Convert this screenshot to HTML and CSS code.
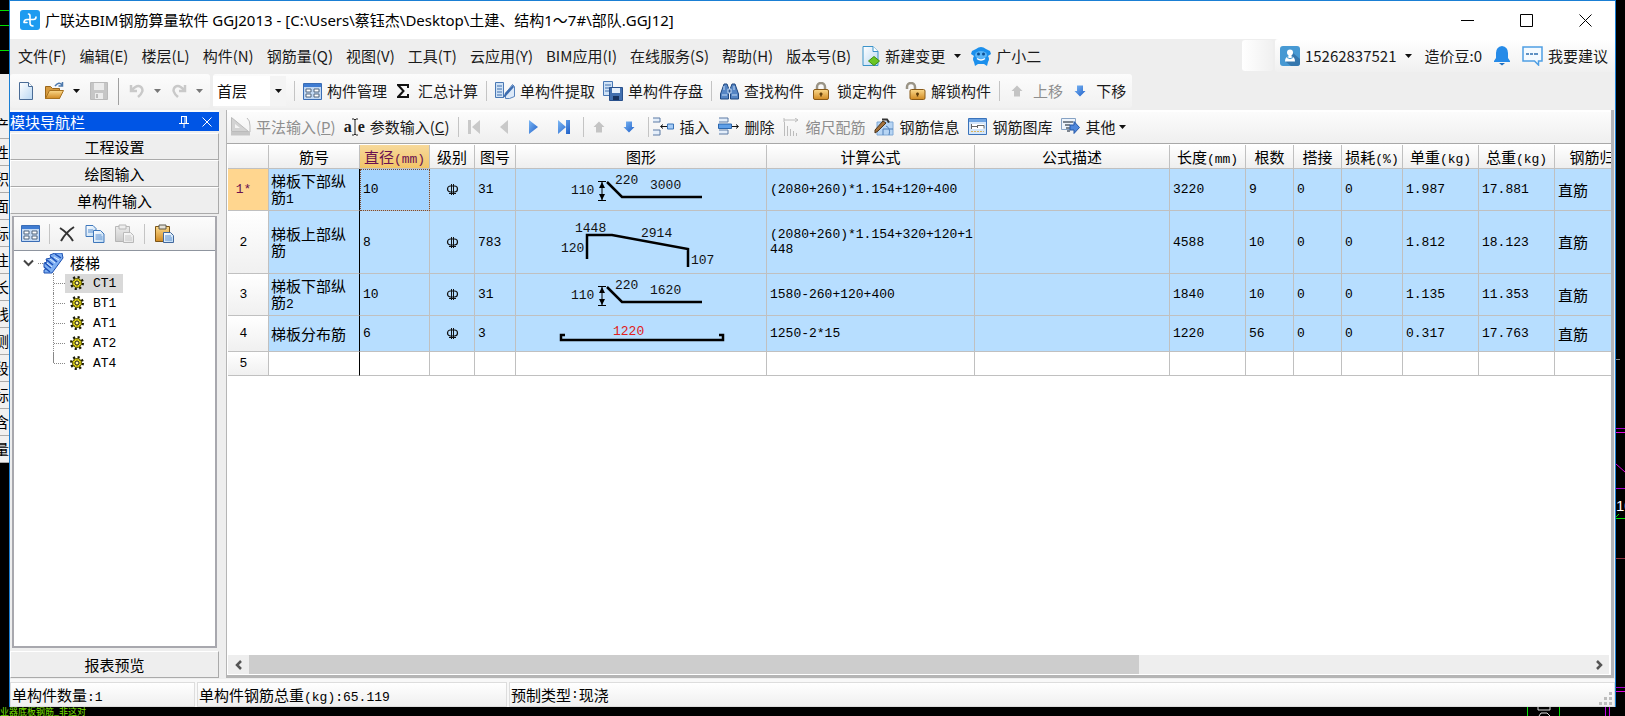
FILE: index.html
```html
<!DOCTYPE html>
<html lang="zh-CN">
<head>
<meta charset="utf-8">
<title>广联达BIM钢筋算量软件 GGJ2013</title>
<link rel="stylesheet" href="styles.css">
</head>
<body>
<svg class="defs" aria-hidden="true">
  <defs>
    <linearGradient id="gBlue" x1="0" y1="0" x2="1" y2="1"><stop offset="0" stop-color="#7db8f5"/><stop offset="1" stop-color="#1e5fc8"/></linearGradient>
    <linearGradient id="gGold" x1="0" y1="0" x2="0" y2="1"><stop offset="0" stop-color="#fbd98b"/><stop offset="1" stop-color="#d18a22"/></linearGradient>
    <linearGradient id="gPage" x1="0" y1="0" x2="1" y2="1"><stop offset="0" stop-color="#ffffff"/><stop offset="1" stop-color="#b9d7f2"/></linearGradient>
    <symbol id="caret" viewBox="0 0 7 4"><path d="M0 0h7L3.500 4z"/></symbol>
    <symbol id="form" viewBox="0 0 19 17"><path d="M.5.500h18v16H.5z" fill="#c3d9f3" stroke="#3a6db5"/><path d="M1 1h17v3H1z" fill="#3f7cd2"/><path d="M3 6h5v3H3zM3 11h5v3H3zM11 6h5v3h-5zM11 11h5v3h-5z" fill="#fff" stroke="#51647d"/></symbol>
    <symbol id="lock" viewBox="0 0 18 18"><path d="M5 9V5a4 4 0 0 1 8 0v4" fill="none" stroke="#9a9486" stroke-width="2.500"/><rect x="1.500" y="7.500" width="15" height="10" rx="1.500" fill="url(#gGold)" stroke="#8a5a17"/><path d="M9 10.500v4M7.500 12h3" stroke="#5c3a08" stroke-width="1.500"/></symbol>
    <symbol id="up" viewBox="0 0 12 12"><path d="M6 .5 11.500 6H9v5.500H3V6H.5z"/></symbol>
    <symbol id="down" viewBox="0 0 12 12"><path d="M6 11.500.5 6H3V.5h6V6h2.500z"/></symbol>
    <symbol id="gear" viewBox="0 0 14 14"><circle cx="7" cy="7" r="5.500" fill="none" stroke="#1b1b08" stroke-width="3" stroke-dasharray="2 2.300"/><circle cx="7" cy="7" r="4.500" fill="#f0e21c" stroke="#55500a"/><path d="M7 2v10M2 7h10M3.500 3.500l7 7M10.500 3.500l-7 7" stroke="#8c840c" stroke-width=".8"/><circle cx="7" cy="7" r="2" fill="#fff79a" stroke="#222"/></symbol>
    <symbol id="grade" viewBox="0 0 13 13"><rect x="1.500" y="3" width="10" height="6" rx="3" fill="none" stroke="#111" stroke-width="1.200"/><path d="M5.500 1v11M7.500 1v11" stroke="#111"/><path d="M3 10.500h7" stroke="#111"/></symbol>
    <symbol id="paste" viewBox="0 0 21 20"><path d="M1.500 2.500h14v15h-14z" fill="url(#gGold)" stroke="#7d5516"/><path d="M5 1h7v4H5z" fill="#e3e0d8" stroke="#5f5a4d"/><path d="M9.500 8.500h7l3 3v7h-10z" fill="url(#gPage)" stroke="#42689d"/><path d="M11 12h6M11 14h7M11 16h7" stroke="#5b8fd0"/></symbol>
  </defs>
</svg>

<div class="desktop">
  <aside class="back-left">
    <svg class="cad-top" viewBox="0 0 9 74" fill="none" stroke="#00e000"><path d="M0 10.500h9M0 25.500h9M0 50.500h9"/></svg>
    <ul class="back-list"><li></li><li>产</li><li>性</li><li>积</li><li>面</li><li>标</li><li>注</li><li>长</li><li>线</li><li>测</li><li>段</li><li>标</li><li>含</li><li>量</li></ul>
    <div class="back-gap"></div>
  </aside>

  <div class="window">
    <header class="titlebar">
      <svg class="logo" width="20" height="20" viewBox="0 0 20 20"><rect width="20" height="20" rx="3" fill="#1d9bf0"/><path d="M8.500 4q1.500 0 1.500 2v7q0 3 3 3M4 12.500q0-3 3-3h6.500q2.500 0 2.500-2.500M4 12.500h3" fill="none" stroke="#fff" stroke-width="1.600" stroke-linecap="round"/></svg>
      <h1>广联达BIM钢筋算量软件 GGJ2013 - [C:\Users\蔡钰杰\Desktop\土建、结构1～7#\部队.GGJ12]</h1>
      <div class="wincontrols">
        <button aria-label="最小化"><svg width="13" height="13"><path d="M0 6.500h13" stroke="#000"/></svg></button>
        <button aria-label="最大化"><svg width="13" height="13"><path d="M.5.500h12v12H.5z" fill="none" stroke="#000"/></svg></button>
        <button aria-label="关闭"><svg width="13" height="13"><path d="M.5.500l12 12M12.500.5l-12 12" stroke="#000"/></svg></button>
      </div>
    </header>

    <nav class="menubar">
      <div class="menus">
        <button>文件(F)</button><button>编辑(E)</button><button>楼层(L)</button><button>构件(N)</button><button>钢筋量(Q)</button><button>视图(V)</button><button>工具(T)</button><button>云应用(Y)</button><button>BIM应用(I)</button><button>在线服务(S)</button><button>帮助(H)</button><button>版本号(B)</button>
      </div>
      <button class="tool"><svg width="18" height="20" viewBox="0 0 18 20"><path d="M1 .5h10l5 5v14H1z" fill="url(#gPage)" stroke="#3b93c9"/><path d="M11 .5v5h5" fill="#fff" stroke="#3b93c9"/><path d="M12 10.500l5.500 4.500-5.500 4.500L6.500 15z" fill="#6ac625" stroke="#3f8d10"/></svg>新建变更<svg class="caret" width="7" height="4"><use href="#caret"/></svg></button>
      <button class="tool"><svg width="20" height="20" viewBox="0 0 20 20"><path d="M5 3q5-4 10 0l4 2 1 3-3 2q2 3 0 6l-1 4-3-2H7l-3 2-1-4q-2-3 0-6L0 8l1-3z" fill="#1b8fec"/><ellipse cx="10" cy="9" rx="6" ry="4" fill="#58b4f7"/><circle cx="7.500" cy="8" r="1.500" fill="#0c4f93"/><circle cx="12.500" cy="8" r="1.500" fill="#0c4f93"/><path d="M6 12.500q4 3 8 0" stroke="#fff" stroke-width="1.500" fill="none"/></svg>广小二</button>
      <div class="blank-tab"></div>
      <div class="account">
        <button class="tool"><svg width="20" height="20" viewBox="0 0 20 20"><rect width="20" height="20" rx="3" fill="#4799d3"/><path d="M13 7l7 6v4q0 3-3 3h-6l-5-4z" fill="#3577ae"/><circle cx="10" cy="6.500" r="3" fill="#fff"/><path d="M8.500 8h3v2.500q3.500.5 3.500 5H5q0-4.500 3.500-5z" fill="#fff"/><path d="M7 11.500q3 2.500 6 0" stroke="#4799d3" fill="none"/></svg><span class="phone">15262837521</span><svg class="caret" width="7" height="4"><use href="#caret"/></svg></button>
        <span class="beans">造价豆:0</span>
        <button class="tool" aria-label="消息"><svg width="16" height="20" viewBox="0 0 16 20"><path d="M8 0q6 1 6 7v5l2 3v1H0v-1l2-3V7Q2 1 8 0z" fill="#268be8"/><path d="M5 17h6l-3 2.500z" fill="#1d6fc0"/></svg></button>
        <button class="tool feedback"><svg width="21" height="20" viewBox="0 0 21 20"><path d="M1 1h19v14h-3.500v4l-4-4H1z" fill="#f4faff" stroke="#4f9fe4" stroke-width="1.500"/><path d="M4 8h3M8 8h3M12 8h4" stroke="#2e6fb0" stroke-width="1.500"/></svg>我要建议</button>
      </div>
    </nav>

    <div class="toolbar main-tools">
      <div class="tb-group first">
        <button aria-label="新建"><svg width="16" height="18" viewBox="0 0 16 18"><path d="M1.500.5h9l4 4v13h-13z" fill="url(#gPage)" stroke="#4a6c96"/><path d="M10.500.5v4h4" fill="#fff" stroke="#4a6c96"/></svg></button>
        <button aria-label="打开" class="open"><svg width="21" height="18" viewBox="0 0 21 18"><path d="M1.500 16.500v-12h5l2 2h7v10z" fill="#d69a3e" stroke="#9a661a"/><path d="M1.500 16.500l4-8h14l-4 8z" fill="url(#gGold)" stroke="#a8721f"/><path d="M11 4q4-5 7-1M18.500 0v4h-4" fill="none" stroke="#4d79ad" stroke-width="1.500"/></svg><svg class="caret" width="7" height="4"><use href="#caret"/></svg></button>
        <button aria-label="保存" disabled><svg width="18" height="18" viewBox="0 0 18 18"><path d="M.5.500h17v17H.5z" fill="#c6c6c6" stroke="#bababa"/><path d="M4 1h10v7H4zM5 11h8v6H5z" fill="#ececec"/><path d="M6 12h2v4H6z" fill="#bbb"/></svg></button>
        <i class="sep dark"></i>
        <button aria-label="撤销" disabled class="undo"><svg width="16" height="16" viewBox="0 0 16 16"><path d="M2 2v6h6M3 7q5-6 9-3 4 4-3 10" fill="none" stroke="#c9c9c9" stroke-width="2.500"/></svg><svg class="caret" width="7" height="4"><use href="#caret"/></svg></button>
        <button aria-label="重做" disabled class="undo"><svg width="16" height="16" viewBox="0 0 16 16"><path d="M14 2v6H8M13 7Q8 1 4 4q-4 4 3 10" fill="none" stroke="#c9c9c9" stroke-width="2.500"/></svg><svg class="caret" width="7" height="4"><use href="#caret"/></svg></button>
      </div>
      <div class="tb-group second">
        <div class="combo"><select aria-label="楼层"><option>首层</option></select><svg class="caret" width="7" height="4"><use href="#caret"/></svg></div>
        <i class="sep"></i>
        <button><svg width="19" height="17"><use href="#form"/></svg>构件管理</button>
        <button class="sum"><svg width="12" height="14" viewBox="0 0 12 14"><path d="M11 4V1H1l5.500 6L1 13h10v-3" fill="none" stroke="#111" stroke-width="2"/></svg>汇总计算</button>
        <i class="sep"></i>
        <button><svg width="20" height="18" viewBox="0 0 20 18"><path d="M.5.500h8v15h-8z" fill="#cfe2f6" stroke="#4a78b4"/><path d="M2 4h5M2 7h5M2 10h5M2 13h5" stroke="#3f6fae"/><path d="M10.500 16.500v-5l7-9 2 2v10l-5 2z" fill="#dce9f8" stroke="#5682bc"/><path d="M8 16l2-5 8-8 1 2-8 9z" fill="#3d6db0"/></svg>单构件提取</button>
        <button><svg width="20" height="20" viewBox="0 0 20 20"><path d="M.5.500h9v14h-9z" fill="#cfe2f6" stroke="#4a78b4"/><path d="M2 4h6M2 7h6M2 10h6" stroke="#3f6fae"/><path d="M6.500 6.500h13v13h-13z" fill="#426fae" stroke="#28508c"/><path d="M9 7h8v5H9z" fill="#e6f0fb"/><path d="M10 15h6v4h-6z" fill="#17325e"/></svg>单构件存盘</button>
        <i class="sep"></i>
        <button><svg width="19" height="17" viewBox="0 0 19 17"><path d="M4 1h3l1.500 4v11h-8v-5zM12 1h3l3.500 10v5h-8V5z" fill="#5585c4" stroke="#1f477f"/><path d="M2 12h5M12 12h5M8 6h3v4H8zM4 3v4M14 3v4" stroke="#c5dbf5" fill="#2b5590"/></svg>查找构件</button>
        <button class="wide"><svg width="18" height="18"><use href="#lock"/></svg>锁定构件</button>
        <button><svg width="21" height="18" viewBox="0 0 21 18"><path d="M2 7V5a4 4 0 0 1 8 0v4" fill="none" stroke="#9a9486" stroke-width="2.500"/><rect x="5" y="7.500" width="15" height="10" rx="1.500" fill="url(#gGold)" stroke="#8a5a17"/><path d="M12.500 10.500v4M11 12h3" stroke="#5c3a08" stroke-width="1.500"/></svg>解锁构件</button>
        <i class="sep"></i>
        <button disabled class="move"><svg width="12" height="12" fill="#c4c4c4"><use href="#up"/></svg>上移</button>
        <button class="move"><svg width="12" height="12" fill="url(#gBlue)"><use href="#down"/></svg>下移</button>
      </div>
    </div>

    <div class="workspace">
      <section class="sidebar">
        <div class="side-title"><span>模块导航栏</span>
          <button aria-label="固定"><svg width="10" height="12" viewBox="0 0 10 12"><path d="M2.500 1v6M6 1v6M2 .5h6M7.500 1v6M0 7.500h10M5 8v4" stroke="#fff" fill="none"/></svg></button>
          <button aria-label="关闭"><svg width="10" height="10"><path d="M.5.500l9 9M9.500.5l-9 9" stroke="#fff"/></svg></button>
        </div>
        <button class="nav-btn">工程设置</button>
        <button class="nav-btn">绘图输入</button>
        <button class="nav-btn">单构件输入</button>
        <div class="tree-panel">
          <div class="tree-tools">
            <button aria-label="构件管理"><svg width="19" height="17"><use href="#form"/></svg></button>
            <i class="sep"></i>
            <button aria-label="删除"><svg width="16" height="16" viewBox="0 0 16 16"><path d="M1 2q8 5 13 13M15 1Q7 6 2 15" stroke="#333" stroke-width="2" fill="none"/></svg></button>
            <button aria-label="复制" class="copy"><svg width="20" height="18" viewBox="0 0 20 18"><path d="M1 .5h7l3 3v8H1z" fill="url(#gPage)" stroke="#3e77bb"/><path d="M8.500 5.500h7l3.500 3.500v8.500H8.500z" fill="url(#gPage)" stroke="#3e77bb"/><path d="M3 5h5M3 7h5M10.500 10h6M10.500 12h7M10.500 14h7" stroke="#5b8fd0"/></svg></button>
            <button aria-label="粘贴" disabled class="faded"><svg width="21" height="20"><use href="#paste"/></svg></button>
            <i class="sep"></i>
            <button aria-label="粘贴构件"><svg width="21" height="20"><use href="#paste"/></svg></button>
          </div>
          <div class="tree">
            <button class="tree-root"><svg width="11" height="8" viewBox="0 0 11 8"><path d="M1 1.500l4.500 4.500L10 1.500" fill="none" stroke="#444" stroke-width="2"/></svg><i class="dots"></i><svg width="21" height="21" viewBox="0 0 21 21"><path d="M1 20v-3l2-1-2-2v-4l3-1-1-3 5-1-1-3 5-2h7l1 5-11 15z" fill="#7fb0f2" stroke="#1c4fb0"/><path d="M2 10l6 5M4 7l6 5M8 4l6 5M12 1l6 4M1 14l6 5" stroke="#1c50b8" stroke-width="1.500"/><path d="M4 10l5 4M7 6l5 4M11 4l5 3" stroke="#e2efff"/></svg><span>楼梯</span></button>
            <ul>
              <li class="on"><button><svg width="14" height="14"><use href="#gear"/></svg>CT1</button></li>
              <li><button><svg width="14" height="14"><use href="#gear"/></svg>BT1</button></li>
              <li><button><svg width="14" height="14"><use href="#gear"/></svg>AT1</button></li>
              <li><button><svg width="14" height="14"><use href="#gear"/></svg>AT2</button></li>
              <li><button><svg width="14" height="14"><use href="#gear"/></svg>AT4</button></li>
            </ul>
          </div>
        </div>
        <button class="nav-btn">报表预览</button>
      </section>

      <main class="editor">
        <div class="toolbar edit-tools">
          <button disabled><svg width="20" height="19" viewBox="0 0 20 19"><path d="M.5.500v14h17z" fill="#d3d3d3" stroke="#bbb"/><path d="M4 7v4h5z" fill="#f4f4f4"/><path d="M16 1q3 2 3 8v6h-4" fill="none" stroke="#bbb"/><path d="M0 15h19v3.500H0z" fill="#c6c6c6"/></svg><span>平法输入(<u>P</u>)</span></button>
          <button class="param"><span class="aie">a</span><svg width="6" height="18" viewBox="0 0 6 18"><path d="M0 1h2l1 1 1-1h2M3 2v14M0 17h2l1-1 1 1h2" fill="none" stroke="#222"/></svg><span class="aie end">e</span><span>参数输入(<u>C</u>)</span></button>
          <i class="sep"></i>
          <button aria-label="首条" disabled><svg width="12" height="14"><path d="M0 0h3v14H0zM12 0v14L4 7z" fill="#c9c9c9"/></svg></button>
          <button aria-label="上一条" disabled><svg width="8" height="14"><path d="M8 0v14L0 7z" fill="#c9c9c9"/></svg></button>
          <button aria-label="下一条"><svg width="9" height="14"><path d="M0 0v14l9-7z" fill="url(#gBlue)"/></svg></button>
          <button aria-label="末条"><svg width="12" height="14"><path d="M0 0v14l8-7zM8 0h4v14H8z" fill="url(#gBlue)"/></svg></button>
          <i class="sep"></i>
          <button aria-label="上移" disabled><svg width="12" height="12" fill="#c4c4c4"><use href="#up"/></svg></button>
          <button aria-label="下移"><svg width="12" height="12" fill="url(#gBlue)"><use href="#down"/></svg></button>
          <i class="sep"></i>
          <button class="op"><svg width="21" height="19" viewBox="0 0 21 19"><path d="M0 1h7v4H0M0 13h7v5H0" fill="#e4eefa" stroke="#5d7ba4"/><path d="M8 9.500h6M10 7.500l-2.500 2 2.500 2" fill="none" stroke="#111"/><path d="M14.500 7h6v5h-6z" fill="#a5cbf5" stroke="#3b74b8"/></svg>插入</button>
          <button class="op"><svg width="21" height="19" viewBox="0 0 21 19"><path d="M1 1h9v4H1M1 13h9v4H1" fill="#e4eefa" stroke="#5d7ba4"/><path d="M.5 7h13v4.500H.5z" fill="#5f9fe8" stroke="#2b66ad"/><path d="M14 9.500h6M18 7.500l2.500 2-2.500 2" fill="none" stroke="#111"/></svg>删除</button>
          <button disabled class="op"><svg width="17" height="18" viewBox="0 0 17 18"><path d="M1.500 4v14M4.500 8v10M7.500 11v7M10.500 13v5M13.500 15v3M1 2h14M12 0l3 2-3 2M1 0v4" fill="none" stroke="#bcbcbc"/></svg>缩尺配筋</button>
          <button class="op"><svg width="20" height="18" viewBox="0 0 20 18"><path d="M3 4h16v13H3z" fill="#b7d5f4" stroke="#7fa8d6"/><path d="M9 17v-6h10M12 8q5 2 3 9" fill="none" stroke="#4f7fb8"/><path d="M1 12L9 3l3 2-8 8-3 2z" fill="#a5713a" stroke="#4b3319"/><path d="M8 1.500h5l2 3" fill="none" stroke="#333" stroke-width="2"/></svg>钢筋信息</button>
          <button class="op"><svg width="19" height="17" viewBox="0 0 19 17"><path d="M.5.500h18v16H.5z" fill="#d5e6f9" stroke="#3a73bb"/><path d="M1 1h17v3H1z" fill="#6da3e2"/><path d="M3 6h13v5H3z" fill="#fff"/><path d="M3.500 6v5M3 8.500h6M9.500 7v3M9 7.500h7v3" fill="none" stroke="#666"/><path d="M3 13.500h13" stroke="#d7b35d" stroke-dasharray="2 1"/></svg>钢筋图库</button>
          <button class="op"><svg width="19" height="17" viewBox="0 0 19 17"><path d="M.5.500h14v11H.5z" fill="#eef4fb" stroke="#86a2c4"/><path d="M2 4h10M4 7h5M5 10h4M6 13h3" stroke="#55606e" stroke-width="1.500"/><path d="M9 7h4V3.500l5.500 6L13 15.500V12H9z" fill="#4f87dc" stroke="#2458a8"/></svg>其他<svg class="caret" width="7" height="4"><use href="#caret"/></svg></button>
        </div>
        <div class="grid-wrap">
          <table>
            <colgroup><col class="w41"><col class="w91"><col class="w70"><col class="w45"><col class="w41"><col class="wshape"><col class="wformula"><col class="wdesc"><col class="w76"><col class="w48"><col class="w48"><col class="w61"><col class="w76"><col class="w76"><col class="w90"></colgroup>
            <thead><tr><th></th><th>筋号</th><th class="hot">直径<span class="n">(mm)</span></th><th>级别</th><th>图号</th><th>图形</th><th>计算公式</th><th>公式描述</th><th>长度<span class="n">(mm)</span></th><th>根数</th><th>搭接</th><th>损耗<span class="n">(%)</span></th><th>单重<span class="n">(kg)</span></th><th>总重<span class="n">(kg)</span></th><th>钢筋归类</th></tr></thead>
            <tbody>
              <tr class="h2"><th class="cur">1*</th><td class="name">梯板下部纵筋<span class="n">1</span></td><td class="sel">10</td><td class="mid"><svg width="13" height="13"><use href="#grade"/></svg></td><td>31</td>
                <td class="shape"><svg width="172" height="38" viewBox="0 0 172 38"><text x="18" y="23">110</text><path d="M45 10.500h8M45 29.500h8M49 11v18" class="thin"/><path d="M49 11l3 6h-6zM49 29l3-6h-6z"/><path d="M54 11l15 15h80" class="bar"/><text x="62" y="13">220</text><text x="97" y="18">3000</text></svg></td>
                <td>(2080+260)*1.154+120+400</td><td></td><td>3220</td><td>9</td><td>0</td><td>0</td><td>1.987</td><td>17.881</td><td class="cjk">直筋</td></tr>
              <tr class="h3"><th>2</th><td class="name">梯板上部纵筋</td><td>8</td><td class="mid"><svg width="13" height="13"><use href="#grade"/></svg></td><td>783</td>
                <td class="shape"><svg width="172" height="56" viewBox="0 0 172 56"><text x="8" y="38">120</text><text x="22" y="18">1448</text><path d="M34 45V21h25l76 14v18" class="bar"/><text x="88" y="23">2914</text><text x="138" y="50">107</text></svg></td>
                <td>(2080+260)*1.154+320+120+1<br>448</td><td></td><td>4588</td><td>10</td><td>0</td><td>0</td><td>1.812</td><td>18.123</td><td class="cjk">直筋</td></tr>
              <tr class="h2"><th>3</th><td class="name">梯板下部纵筋<span class="n">2</span></td><td>10</td><td class="mid"><svg width="13" height="13"><use href="#grade"/></svg></td><td>31</td>
                <td class="shape"><svg width="172" height="38" viewBox="0 0 172 38"><text x="18" y="23">110</text><path d="M45 10.500h8M45 29.500h8M49 11v18" class="thin"/><path d="M49 11l3 6h-6zM49 29l3-6h-6z"/><path d="M54 11l15 15h80" class="bar"/><text x="62" y="13">220</text><text x="97" y="18">1620</text></svg></td>
                <td>1580-260+120+400</td><td></td><td>1840</td><td>10</td><td>0</td><td>0</td><td>1.135</td><td>11.353</td><td class="cjk">直筋</td></tr>
              <tr class="h1"><th>4</th><td class="name">梯板分布筋</td><td>6</td><td class="mid"><svg width="13" height="13"><use href="#grade"/></svg></td><td>3</td>
                <td class="shape"><svg width="172" height="32" viewBox="0 0 172 32"><text x="60" y="17" class="red">1220</text><path d="M12 17H8v5h162v-5h-4" class="bar"/></svg></td>
                <td>1250-2*15</td><td></td><td>1220</td><td>56</td><td>0</td><td>0</td><td>0.317</td><td>17.763</td><td class="cjk">直筋</td></tr>
              <tr class="new"><th>5</th><td class="name"></td><td></td><td></td><td></td><td></td><td></td><td></td><td></td><td></td><td></td><td></td><td></td><td></td><td></td></tr>
            </tbody>
          </table>
        </div>
        <div class="hscroll">
          <button aria-label="向左"><svg width="8" height="10" viewBox="0 0 8 10"><path d="M6 1L2 5l4 4" fill="none" stroke="#555" stroke-width="2.500"/></svg></button>
          <div class="track"><div class="thumb"></div></div>
          <button aria-label="向右"><svg width="8" height="10" viewBox="0 0 8 10"><path d="M2 1l4 4-4 4" fill="none" stroke="#555" stroke-width="2.500"/></svg></button>
        </div>
      </main>
    </div>

    <footer class="statusbar">
      <div class="cell count">单构件数量<span class="n">:1</span></div>
      <div class="cell total">单构件钢筋总重<span class="n">(kg):65.119</span></div>
      <div class="cell kind">预制类型<span class="n">:</span>现浇
        <svg class="grip" width="14" height="14"><path d="M10 0h3v3h-3zM5 5h3v3H5zM10 5h3v3h-3zM0 10h3v3H0zM5 10h3v3H5zM10 10h3v3h-3z" fill="#bdbdbd"/></svg></div>
    </footer>
  </div>

  <svg class="back-right" width="9" height="707" viewBox="0 0 9 707" fill="none">
    <path d="M0 359.500h4" stroke="#888"/><path d="M0 428.500h9M0 488.500h9M0 687.500h9" stroke="#a000c8"/><path d="M0 432.500h9M0 464l9 8M0 691.500h9" stroke="#e000e0"/><path d="M0 518.500h9M0 517l3-3" stroke="#00e000"/><path d="M0 558.500h9" stroke="#8a3040"/><text x="0" y="511">10</text>
  </svg>
  <div class="back-bottom">
    <span class="cad-text">业器底板钢筋_非这对</span>
    <svg width="100" height="9" viewBox="0 0 100 9" fill="none"><path d="M2.500 0v9M34.500 0v9" stroke="#00e000"/><path d="M80.500 0v9M84.500 0v9" stroke="#c000e0"/><path d="M13 3h12M13 0v3M25 0v3M14 9l2-3h6l3 3" stroke="#ddd"/></svg>
  </div>
</div>
</body>
</html>
```

FILE: styles.css
```css
* { box-sizing: border-box; }
html, body { height: 100%; }
body {
  margin: 0;
  background: #000;
  color: #1a1a1a;
  font: 15px/20px "Noto Sans CJK SC", sans-serif;
  overflow: hidden;
}
button {
  border: 0;
  padding: 0;
  background: none;
  font: inherit;
  color: inherit;
  display: flex;
  align-items: center;
  white-space: nowrap;
}
button:disabled { color: #8e8e8e; }
svg { display: block; flex: none; }
ul { list-style: none; margin: 0; padding: 0; }
.defs { position: absolute; width: 0; height: 0; }
.n { font: 13px/13px "Liberation Mono", monospace; }

.desktop {
  min-height: 100vh;
  display: grid;
  grid-template-columns: 9px minmax(0, 1fr) 9px;
  grid-template-rows: minmax(0, 1fr) 9px;
}

/* parts of the windows behind */
.back-left { overflow: hidden; display: flex; flex-direction: column; }
.cad-top { width: 9px; height: 74px; }
.back-list { background: #f0f0f0; color: #000; }
.back-list li {
  height: 27px;
  line-height: 26px;
  border-bottom: 1px solid #aaa;
  display: flex;
  justify-content: flex-end;
}
.back-list li:first-child { height: 38px; border: 0; }
.back-right { overflow: hidden; }
.back-right text { fill: #fff; font: 15px "Liberation Sans Narrow", "Liberation Sans", sans-serif; }
.back-bottom {
  grid-column: 1 / -1;
  display: flex;
  justify-content: space-between;
  overflow: hidden;
}
.cad-text { color: #7be000; font-size: 9px; line-height: 9px; }

.window {
  display: flex;
  flex-direction: column;
  min-width: 0;
  background: #eee;
  border: 1px solid #1a7fd4;
  border-bottom: 0;
}

/* title */
.titlebar { height: 38px; flex: none; display: flex; align-items: center; background: #fff; padding-left: 10px; color: #000; }
.titlebar h1 { margin: 0 0 0 5px; font: 400 15px/20px "Noto Sans", "Noto Sans CJK SC", sans-serif; flex: 1; white-space: nowrap; }
.wincontrols { display: flex; }
.wincontrols button { width: 59px; height: 38px; justify-content: center; }

/* menus */
.menubar { height: 35px; flex: none; display: flex; align-items: flex-start; }
.menubar > .tool, .menus, .account { height: 33px; }
.menus { display: flex; gap: 13px; padding: 0 11px 0 8px; }
.tool { display: flex; align-items: center; gap: 5px; margin-right: 10px; }
.caret { fill: #111; margin-left: 4px; }
button:disabled .caret { fill: #777; }
.blank-tab { width: 31px; height: 31px; margin: 1px 2px 0 auto; background: linear-gradient(90deg, #fff, #f0f0f0); border-radius: 3px; }
.account {
  display: flex;
  align-items: center;
  padding: 0 7px 0 5px;
  background: linear-gradient(#fff, #f0f0f0);
  border-radius: 3px 0 0 3px;
}
.account .tool { margin-right: 12px; }
.account .tool.feedback { margin-right: 0; }
.beans { margin-right: 12px; }

/* toolbars */
.toolbar { display: flex; align-items: center; }
.toolbar button { gap: 5px; }
.sep { width: 1px; height: 20px; background: #c4c4c4; flex: none; }
.sep.dark { background: #a0a0a0; height: 27px; }
.main-tools { height: 34px; flex: none; margin-bottom: 2px; gap: 3px; }
.tb-group {
  height: 34px;
  display: flex;
  align-items: center;
  background: linear-gradient(#fcfcfc, #f1f1f1);
  border-radius: 3px;
}
.first { gap: 10px; padding: 0 7px 0 8px; }
.toolbar .open { gap: 4px; }
.toolbar .undo { gap: 5px; }
.second { gap: 8px; padding-right: 6px; }
.combo { display: flex; align-items: center; position: relative; height: 30px; background: #fff; }
.combo select {
  appearance: none;
  width: 73px;
  height: 30px;
  border: 0;
  padding: 0 0 0 4px;
  background: linear-gradient(90deg, #fff 57px, #f4f4f4 57px);
  font: inherit;
  color: #111;
}
.combo .caret { position: absolute; right: 4px; pointer-events: none; }
.toolbar .sum { gap: 9px; margin-left: 2px; }
.toolbar .wide { gap: 7px; }
.toolbar .move { gap: 10px; margin-left: 3px; }

/* work area */
.workspace { flex: 1; min-height: 0; display: flex; gap: 7px; }
.sidebar { width: 209px; flex: none; display: flex; flex-direction: column; border-top: 2px solid #fafafa; }
.side-title { height: 19px; flex: none; display: flex; align-items: center; gap: 13px; background: #0055e5; color: #fff; padding-right: 7px; margin-bottom: 2px; }
.side-title span { flex: 1; }
.nav-btn {
  height: 27px;
  flex: none;
  justify-content: center;
  color: #000;
  background: #eee;
  border: 1px solid #aaa;
  border-top-color: #fff;
  border-left-color: #fff;
}
.tree-panel { flex: 1; min-height: 0; margin: 2px 2px 3px; border: 1px solid #a8a8ae; border-width: 1px 2px 2px; display: flex; flex-direction: column; }
.tree-tools { height: 34px; flex: none; display: flex; align-items: center; padding-left: 7px; gap: 9px; background: linear-gradient(#fcfcfc, #efefef); border-bottom: 1px solid #8f959f; }
.tree-tools .copy { margin-left: 1px; }
.faded { filter: grayscale(1); opacity: .4; }
.tree { flex: 1; background: #fff; padding: 2px 0 0 9px; color: #000; }
.tree-root { height: 20px; width: 100%; }
.dots { width: 5px; margin-left: 4px; border-top: 1px dotted #888; }
.tree-root span { margin-left: 6px; }
.tree ul { margin-left: 30px; }
.tree li { height: 20px; display: flex; align-items: center; border-left: 1px dotted #888; }
.tree li:last-child { border-image: linear-gradient(#888 50%, transparent 50%) 1; }
.tree li::before { content: ""; width: 11px; border-top: 1px dotted #888; }
.tree li button { height: 19px; padding: 0 7px 0 5px; gap: 9px; font: 13px "Liberation Mono", monospace; }
.tree li.on button { background: #d9d9d9; }

/* editor */
.editor { flex: 1; min-width: 0; display: flex; flex-direction: column; margin-right: 1px; border: 1px solid #b5b5b5; border-width: 0 3px 3px 1px; border-right-color: #b3b4b8; background: #fff; }
.edit-tools { height: 34px; flex: none; padding: 0 0 2px 4px; gap: 8px; background: linear-gradient(#fcfcfc, #efefef); border-top: 2px solid #fff; border-bottom: 1px solid #a8a8a8; }
.edit-tools .sep { margin-right: -4px; }
.edit-tools button[aria-label] { min-width: 12px; justify-content: center; margin: 0 5px; }
.toolbar .param { gap: 0; }
.aie { font: bold 16px "Liberation Serif", serif; }
.aie.end { margin-right: 5px; }
.toolbar .op { gap: 6px; }
.op .caret { margin-left: -3px; }

.grid-wrap { flex: 1; min-height: 0; overflow: hidden; padding: 1px 0 0 1px; }
table { border-collapse: separate; border-spacing: 0; table-layout: fixed; width: calc(100% + 34px); color: #000; }
th, td { padding: 0 0 0 3px; border-right: 1px solid #c0c0c0; border-bottom: 1px solid #c0c0c0; font-weight: 400; text-align: left; overflow: hidden; white-space: nowrap; }
td { background: #b7deff; font: 13px/15px "Liberation Mono", monospace; }
thead th { height: 24px; padding: 0; line-height: 22px; text-align: center; background: linear-gradient(#fff, #eee); }
thead .hot { color: #6a1150; background: linear-gradient(#f7d99b, #f3c568); }
tbody th { padding: 0 9px 0 0; text-align: center; font: 13px "Liberation Mono", monospace; background: linear-gradient(#fff, #f0f0f0); }
tbody .cur { background: #ffd68f; color: #6a1150; }
.name { font: 15px/16px "Noto Sans CJK SC", sans-serif; padding-left: 2px; white-space: normal; border-right-color: #000; }
.cjk { font: 15px/16px "Noto Sans CJK SC", sans-serif; }
.sel { background: #a4d4ff; outline: 1px dotted #7a4a30; outline-offset: -1px; }
.mid svg { margin: 0 auto; }
.mid { padding: 0; }
.shape { padding: 0; }
.shape svg { margin: 0 auto 0 37px; }
.shape text { font: 13px "Liberation Mono", monospace; fill: #111; }
.shape .red { fill: #e02020; }
.bar { fill: none; stroke: #000; stroke-width: 2.5; }
.thin { fill: none; stroke: #000; }
.h2 td { height: 42px; }
.h3 td { height: 63px; }
.h1 td { height: 36px; }
.new td { height: 24px; background: #fff; }
.w41 { width: 41px; }
.w91 { width: 91px; }
.w70 { width: 70px; }
.w45 { width: 45px; }
.w48 { width: 48px; }
.w61 { width: 61px; }
.w76 { width: 76px; }
.w90 { width: 90px; }
.wshape { width: 251px; }
.wformula { width: 208px; }
.wdesc { width: 195px; }

.hscroll { height: 19px; flex: none; margin: 0 2px 1px 1px; display: flex; background: #eee; }
.hscroll button { width: 21px; justify-content: center; }
.track { flex: 1; display: flex; }
.thumb { width: 66.5%; background: #cdcdcd; }

/* status */
.statusbar { height: 28px; flex: none; margin-top: 1px; padding-top: 3px; display: flex; gap: 2px; background: #f8f8f8; color: #000; }
.cell { height: 25px; line-height: 23px; padding-left: 1px; border: 1px solid #ddd; background: linear-gradient(#fff, #efefef); white-space: nowrap; }
.count { width: 185px; }
.total { width: 310px; }
.kind { flex: 1; display: flex; align-items: center; }
.grip { margin: 8px 1px 0 auto; }
```
